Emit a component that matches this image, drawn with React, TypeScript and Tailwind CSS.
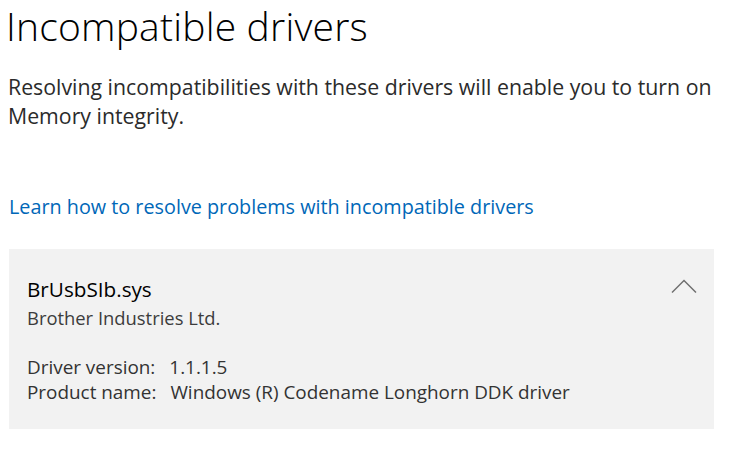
const font = { fontFamily: '"Segoe UI", "Open Sans", "Noto Sans", sans-serif' };

const App = () => {
  return (
    <div className="w-[742px] h-[454px] bg-white overflow-hidden" style={font}>
      <h1 className="pl-[6px] pt-[1px] text-[39px] font-light leading-[50px] text-black tracking-[0.2px]">
        Incompatible drivers
      </h1>
      <p className="pl-[8px] mt-[21px] text-[21.3px] leading-[29px] text-[#2b2b2b]">
        Resolving incompatibilities with these drivers will enable you to turn on Memory integrity.
      </p>
      <a className="block pl-[9px] mt-[63px] text-[19.8px] leading-[28px] text-[#0067b8]">
        Learn how to resolve problems with incompatible drivers
      </a>

      {/* Driver card */}
      <div className="ml-[9px] mt-[28px] w-[705px] h-[180px] bg-[#f2f2f2] pl-[18px] pr-[18px] pt-[26px]">
        <div className="flex items-start justify-between">
          <div>
            <div className="text-[20.7px] leading-[28px] text-black">BrUsbSIb.sys</div>
            <div className="text-[18.4px] leading-[30px] text-[#3c3c3c]">Brother Industries Ltd.</div>
          </div>
          <svg width="26" height="16" viewBox="0 0 26 16" className="mt-[3px] mr-[-1px]">
            <path d="M1 14.5 L13 2.5 L25 14.5" fill="none" stroke="#707070" strokeWidth="1.5" />
          </svg>
        </div>
        <div className="mt-[22px] text-[18.9px] leading-[25px] text-[#333]">
          <div className="flex gap-[14px]">
            <span>Driver version:</span>
            <span>1.1.1.5</span>
          </div>
          <div className="flex gap-[14px]">
            <span>Product name:</span>
            <span>Windows (R) Codename Longhorn DDK driver</span>
          </div>
        </div>
      </div>
    </div>
  );
};

export default App;
